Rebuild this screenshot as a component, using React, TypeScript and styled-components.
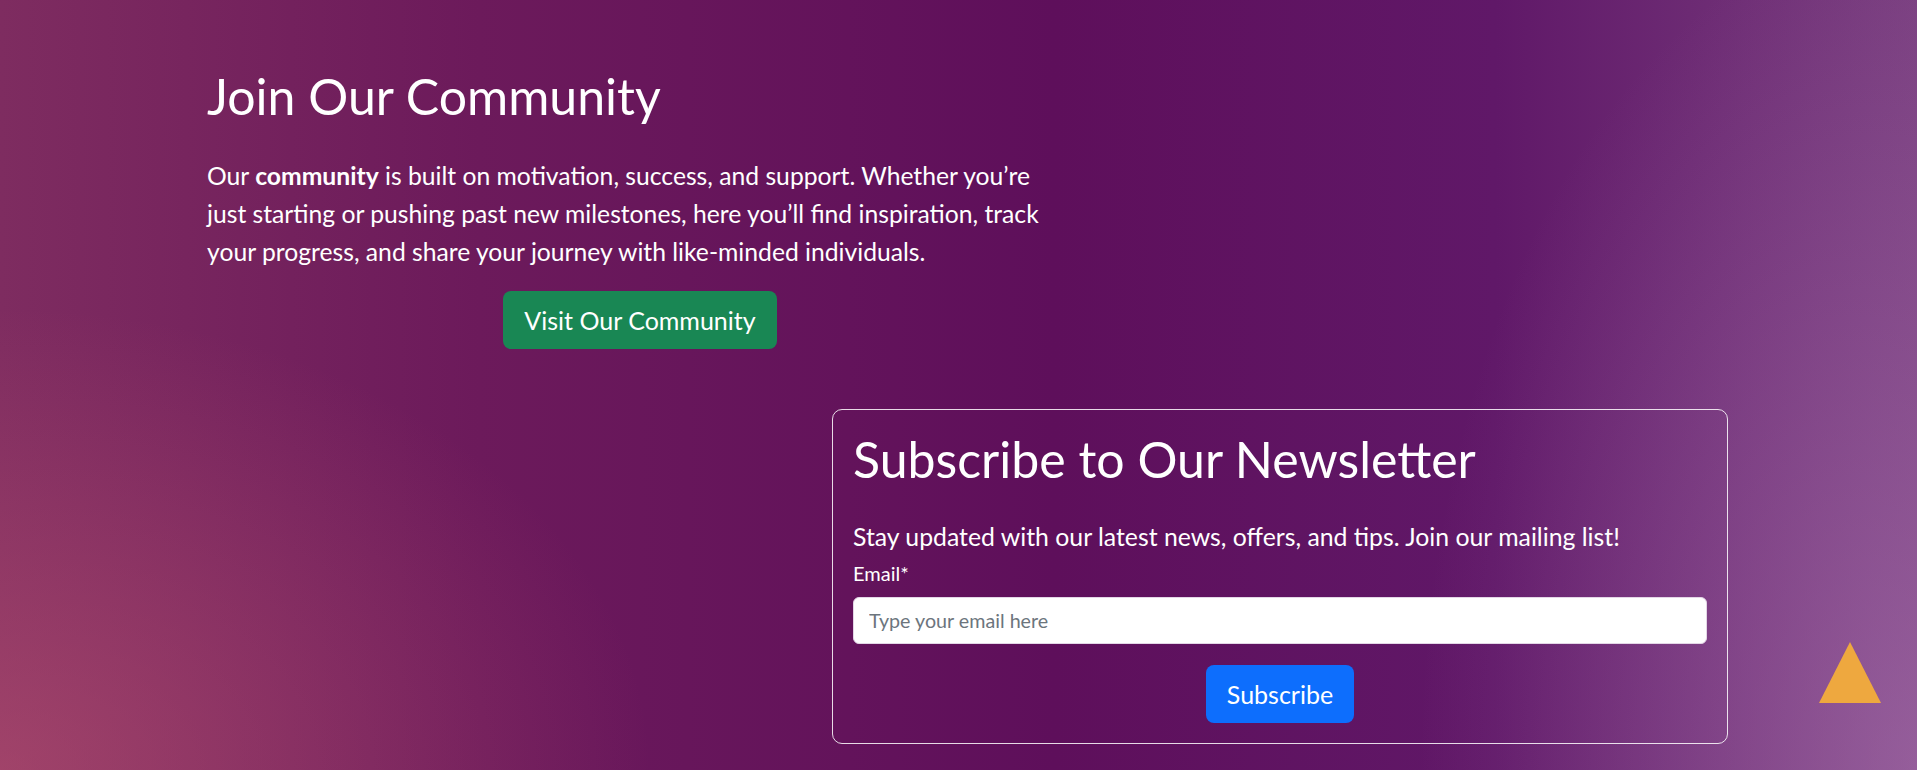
import * as React from 'react';
import styled, { createGlobalStyle } from 'styled-components';

const GlobalStyle = createGlobalStyle`
  html, body {
    margin: 0;
    padding: 0;
  }
  body {
    font-family: Lato, "Noto Sans", sans-serif;
    color: #fff;
  }
  * {
    box-sizing: border-box;
  }
`;

const Page = styled.main`
  height: 770px;
  overflow: hidden;
  padding: 66px 189px 0 207px;
  background:
    radial-gradient(ellipse 34% 60% at 0% 100%, rgba(195, 90, 115, 0.5), rgba(195, 90, 115, 0) 100%),
    radial-gradient(ellipse 26% 110% at 100% 100%, rgba(190, 140, 195, 0.4), rgba(190, 140, 195, 0) 100%),
    linear-gradient(90deg, #7e2c60 0%, #6c1a5b 25%, #5e0f5b 55%, #601868 78%, #7a3f80 100%);
`;

const Community = styled.section`
  width: 866px;
`;

const Title = styled.h1`
  margin: 0;
  font-size: 50px;
  font-weight: 400;
  line-height: 60px;
`;

const Intro = styled.p`
  margin: 31px 0 0;
  font-size: 24.7px;
  line-height: 38px;
`;

const Centered = styled.div<{ $gap: number }>`
  display: flex;
  justify-content: center;
  margin-top: ${({ $gap }) => $gap}px;
`;

const Button = styled.button<{ $tone: string }>`
  border: none;
  border-radius: 8px;
  padding: 11px 21px;
  background: ${({ $tone }) => $tone};
  color: #fff;
  font-family: inherit;
  font-size: 25px;
  line-height: 36px;
  cursor: pointer;
`;

const NewsletterRow = styled.div`
  display: flex;
  justify-content: flex-end;
  margin-top: 60px;
`;

const NewsletterBox = styled.form`
  width: 896px;
  padding: 20px;
  border: 1px solid rgba(255, 255, 255, 0.85);
  border-radius: 10px;
`;

const BoxTitle = styled.h2`
  margin: 0 0 31px;
  font-size: 50px;
  font-weight: 400;
  line-height: 58px;
`;

const Lead = styled.p`
  margin: 0 0 5px;
  font-size: 24.8px;
  line-height: 36px;
`;

const Label = styled.label`
  display: block;
  margin-bottom: 10px;
  font-size: 20px;
  line-height: 27px;
`;

const EmailInput = styled.input`
  display: block;
  width: 100%;
  height: 47px;
  padding: 0 15px;
  border: 1px solid #e3d6e6;
  border-radius: 6px;
  background: #fff;
  font-family: inherit;
  font-size: 19.7px;
  color: #212529;
  &::placeholder {
    color: #6c757d;
  }
`;

const ScrollTop = styled.a`
  position: fixed;
  right: 36px;
  bottom: 67px;
  display: block;
  width: 62px;
  height: 61px;
`;

function App() {
  return (
    <Page>
      <GlobalStyle />
      <Community>
        <Title>Join Our Community</Title>
        <Intro>
          Our <strong>community</strong> is built on motivation, success, and support. Whether
          you’re just starting or pushing past new milestones, here you’ll find inspiration, track
          your progress, and share your journey with like-minded individuals.
        </Intro>
        <Centered $gap={20}>
          <Button type="button" $tone="#198754">
            Visit Our Community
          </Button>
        </Centered>
      </Community>
      <NewsletterRow>
        <NewsletterBox onSubmit={(e) => e.preventDefault()}>
          <BoxTitle>Subscribe to Our Newsletter</BoxTitle>
          <Lead>Stay updated with our latest news, offers, and tips. Join our mailing list!</Lead>
          <Label htmlFor="email">Email*</Label>
          <EmailInput id="email" type="email" placeholder="Type your email here" />
          <Centered $gap={21}>
            <Button type="submit" $tone="#0d6efd">
              Subscribe
            </Button>
          </Centered>
        </NewsletterBox>
      </NewsletterRow>
      <ScrollTop href="#top" aria-label="Back to top">
        <svg width="62" height="61" viewBox="0 0 62 61">
          <polygon points="31,0 62,61 0,61" fill="#eea83f" />
        </svg>
      </ScrollTop>
    </Page>
  );
}

export default App;
